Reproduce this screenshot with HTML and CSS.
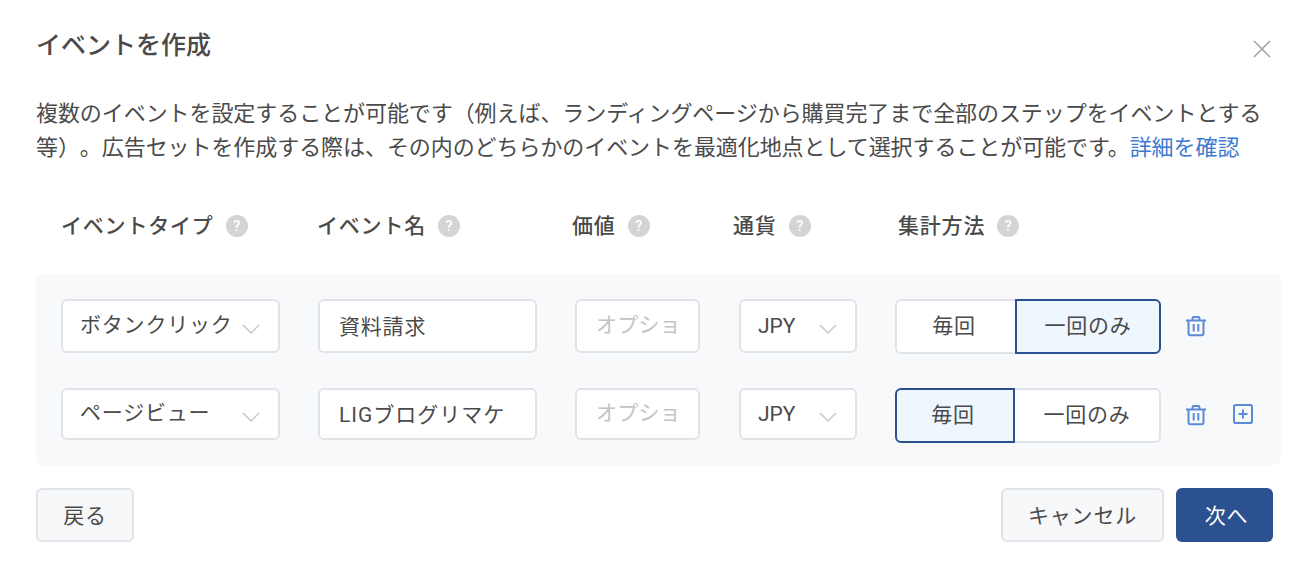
FILE: index.html
```html
<!DOCTYPE html>
<html lang="ja">
<head>
<meta charset="utf-8">
<title>イベントを作成</title>
<link rel="stylesheet" href="styles.css">
</head>
<body>
<main class="dialog">
  <header class="dialog-head">
    <h1 class="title">イベントを作成</h1>
    <button class="close" aria-label="閉じる">
      <svg width="20" height="20" viewBox="0 0 20 20"><path d="M2 2 18 18M18 2 2 18" stroke="#a3a3a3" stroke-width="1.6" fill="none"/></svg>
    </button>
  </header>
  <p class="desc">複数のイベントを設定することが可能です（例えば、ランディングページから購買完了まで全部のステップをイベントとする等）。広告セットを作成する際は、その内のどちらかのイベントを最適化地点として選択することが可能です。<a class="link" href="#">詳細を確認</a></p>

  <div class="labels">
    <div class="label l-type">イベントタイプ<span class="help">?</span></div>
    <div class="label l-name">イベント名<span class="help">?</span></div>
    <div class="label l-value">価値<span class="help">?</span></div>
    <div class="label l-cur">通貨<span class="help">?</span></div>
    <div class="label">集計方法<span class="help">?</span></div>
  </div>

  <section class="panel">
    <div class="row">
      <div class="field select f-type"><span>ボタンクリック</span><svg class="chev" viewBox="0 0 18 10"><path d="M1 1 9 9 17 1"/></svg></div>
      <input class="field input f-name" value="資料請求">
      <input class="field input f-value" placeholder="オプショ">
      <div class="field select f-cur"><span>JPY</span><svg class="chev" viewBox="0 0 18 10"><path d="M1 1 9 9 17 1"/></svg></div>
      <div class="seg">
        <button class="seg-btn seg-a">毎回</button>
        <button class="seg-btn seg-b on">一回のみ</button>
      </div>
      <svg class="icon" width="22" height="22" viewBox="0 0 22 22"><path d="M1 5.500H21M7.500 5.500V3.400C7.500 2.600 8 2 8.800 2H13.200C14 2 14.500 2.600 14.500 3.400V5.500M3.500 5.500V18.500C3.500 19.600 4.200 20.300 5.300 20.300H16.700C17.800 20.300 18.500 19.600 18.500 18.500V5.500M8.700 9V16.500M13.300 9V16.500"/></svg>
    </div>
    <div class="row row-b">
      <div class="field select f-type"><span>ページビュー</span><svg class="chev" viewBox="0 0 18 10"><path d="M1 1 9 9 17 1"/></svg></div>
      <input class="field input f-name" value="LIGブログリマケ">
      <input class="field input f-value" placeholder="オプショ">
      <div class="field select f-cur"><span>JPY</span><svg class="chev" viewBox="0 0 18 10"><path d="M1 1 9 9 17 1"/></svg></div>
      <div class="seg">
        <button class="seg-btn seg-a on">毎回</button>
        <button class="seg-btn seg-b">一回のみ</button>
      </div>
      <svg class="icon" width="22" height="22" viewBox="0 0 22 22"><path d="M1 5.500H21M7.500 5.500V3.400C7.500 2.600 8 2 8.800 2H13.200C14 2 14.500 2.600 14.500 3.400V5.500M3.500 5.500V18.500C3.500 19.600 4.200 20.300 5.300 20.300H16.700C17.800 20.300 18.500 19.600 18.500 18.500V5.500M8.700 9V16.500M13.300 9V16.500"/></svg>
      <svg class="icon plus" width="20" height="20" viewBox="0 0 20 20"><rect x="1" y="1" width="18" height="18" rx="1.800"/><path d="M10 5.500V14.500M5.500 10H14.500"/></svg>
    </div>
  </section>

  <footer class="actions">
    <button class="btn back">戻る</button>
    <button class="btn cancel">キャンセル</button>
    <button class="btn next">次へ</button>
  </footer>
</main>
</body>
</html>
```
FILE: styles.css
```css
* { box-sizing: border-box; }
html, body { margin: 0; padding: 0; background: #fff; }
body {
  font-family: Roboto, "Noto Sans CJK JP", sans-serif;
  color: #4a4a4a;
  width: 1310px;
  height: 563px;
  overflow: hidden;
  text-spacing-trim: space-all;
}
.dialog { padding: 28px 29px 0 36px; }
.dialog-head { display: flex; justify-content: space-between; align-items: flex-start; height: 57px; }
.title { margin: 0; font-size: 25px; line-height: 36px; font-weight: 500; color: #4a4a4a; }
.close { border: 0; background: none; padding: 0; margin: 11px 9px 0 0; width: 20px; height: 20px; display: block; }
.close svg { display: block; }
.desc { margin: 12px 0 0; width: 1240px; font-size: 22px; line-height: 34px; color: #4a4a4a; letter-spacing: -0.07px; }
.link { color: #3e7bd0; text-decoration: none; }

.labels { display: flex; align-items: center; height: 30px; margin-top: 46px; padding-left: 25px; }
.label { display: flex; align-items: center; font-size: 21px; font-weight: 500; color: #4a4a4a; line-height: 30px; letter-spacing: .8px; }
.l-type { width: 256px; }
.l-name { width: 255px; }
.l-value { width: 161px; }
.l-cur { width: 165px; }
.help {
  width: 22px; height: 22px; border-radius: 50%; margin-left: 12px;
  background: #d4d4d4; color: #fff; font-size: 15px; font-weight: 500; letter-spacing: 0;
  display: flex; align-items: center; justify-content: center; line-height: 1;
}

.panel { margin-top: 33px; width: 1245px; height: 191px; background: #f8f9fb; border-radius: 6px; padding: 25px 25px 0; }
.row { display: flex; align-items: flex-start; height: 55px; }
.row-b { margin-top: 34px; }
.field {
  height: 54px; background: #fff; border: 2px solid #e0e3e8; border-radius: 6px;
  font: 21px Roboto, "Noto Sans CJK JP", sans-serif; color: #4a4a4a; letter-spacing: .8px;
}
.row-b .field { height: 52px; }
.input { padding: 0 19px 3px; outline: 0; }
.row-b .f-name { letter-spacing: 1px; }
.input::placeholder { color: #c4c4c4; opacity: 1; }
.f-value { letter-spacing: .2px; }
.select { display: flex; align-items: center; justify-content: space-between; padding: 0 18px 0 17px; white-space: nowrap; }
.select span { position: relative; top: -3px; }
.f-cur { letter-spacing: 0; }
.select.f-cur span { top: 0; }
.chev { width: 18px; height: 10px; fill: none; stroke: #c4c6ca; stroke-width: 1.400; margin-top: 5px; flex: none; }
.f-type { width: 219px; margin-right: 38px; }
.f-name { width: 219px; margin-right: 38px; }
.f-value { width: 125px; margin-right: 39px; }
.f-cur { width: 118px; margin-right: 38px; }
.seg { display: flex; width: 266px; height: 55px; flex: none; }
.seg-btn {
  font: 21px Roboto, "Noto Sans CJK JP", sans-serif; color: #4a4a4a; letter-spacing: .8px;
  background: #fff; border: 2px solid #e0e3e8; padding: 0 0 5px; height: 55px;
}
.seg-a { width: 120px; border-radius: 6px 0 0 6px; border-right: 0; padding-right: 4px; }
.seg-b { width: 146px; border-radius: 0 6px 6px 0; border-left: 0; }
.seg-btn.on { background: #eef6fe; border: 2px solid #2c5190; }
.icon { fill: none; stroke: #5b8ad6; stroke-width: 2; flex: none; margin: 16px 0 0 24px; }
.plus { margin: 16px 0 0 26px; stroke-width: 2; }

.actions { display: flex; margin-top: 23px; height: 54px; }
.btn { height: 54px; border-radius: 6px; font: 21px Roboto, "Noto Sans CJK JP", sans-serif; padding: 0 0 2px; letter-spacing: .8px; }
.back, .cancel { background: #f7f8fa; border: 2px solid #e0e3e8; color: #4a4a4a; }
.back { width: 98px; margin-right: auto; }
.cancel { width: 163px; margin-right: 12px; }
.next { width: 97px; background: #2c5190; border: 0; color: #fff; margin-right: 8px; padding-left: 4px; }
```
